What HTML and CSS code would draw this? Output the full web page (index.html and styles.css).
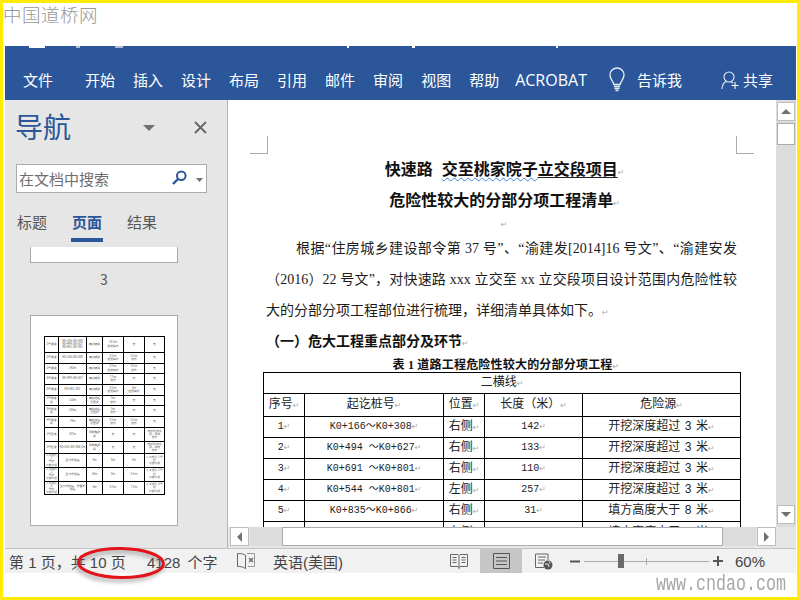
FILE: index.html
```html
<!DOCTYPE html>
<html lang="zh-CN">
<head>
<meta charset="utf-8">
<title>导航</title>
<link rel="stylesheet" href="styles.css">
</head>
<body>
<div class="frame">
  <header class="head"><span class="mark-cn">中国道桥网</span></header>

  <nav class="ribbon">
    <svg class="qat" width="791" height="3" viewBox="0 0 791 3"><rect x="24" width="16" height="2" fill="#fff"/><rect x="71" width="4" height="2" fill="#aebbd2"/><rect x="110" width="8" height="2" fill="#aebbd2"/><rect x="342" width="2" height="2" fill="#fff"/><rect x="407" width="3" height="2" fill="#fff"/><rect x="551" width="2" height="2" fill="#fff"/></svg>
    <span class="tab-file">文件</span>
    <span>开始</span><span>插入</span><span>设计</span><span>布局</span><span>引用</span><span>邮件</span><span>审阅</span><span>视图</span><span>帮助</span>
    <span class="acro">ACROBAT</span>
    <svg class="bulb" width="16" height="25" viewBox="0 0 16 25" fill="none" stroke="#e8edf6" stroke-width="1.3"><path d="M4.8 17.5C4.5 14 1 12.5 1 8a7 7 0 0 1 14 0c0 4.500-3.500 6-3.800 9.500z"/><path d="M5 19.500h6M5.500 21.500h5M6.500 23.500h3" stroke-width="1.500"/></svg>
    <span class="tell">告诉我</span>
    <svg class="person" width="18" height="19" viewBox="0 0 18 19" fill="none" stroke="#e8edf6" stroke-width="1.1"><circle cx="8" cy="6" r="5"/><path d="M1 18c0-4 2-6.500 4.500-7.800M10 11l2 1"/><path d="M14 11v7M10.500 14.500h7" stroke="#fff"/></svg>
    <span class="share">共享</span>
  </nav>

  <main class="main">
    <aside class="nav">
      <div class="nav-head">
        <h1 class="nav-title">导航</h1>
        <svg class="nav-arrow" width="12" height="6" viewBox="0 0 12 6"><path d="M0 0h12L6 6z" fill="#707070"/></svg>
        <svg class="nav-close" width="13" height="13" viewBox="0 0 13 13" stroke="#666" stroke-width="1.800"><path d="M1 1l11 11M12 1L1 12"/></svg>
      </div>
      <div class="search">
        <span class="search-text">在文档中搜索</span>
        <svg class="search-icon" width="15" height="15" viewBox="0 0 15 15" fill="none" stroke="#2b579a" stroke-width="2"><circle cx="9.300" cy="5.700" r="4.300"/><path d="M6 9l-5 5" stroke-width="2.400"/></svg>
        <svg class="search-drop" width="7" height="4" viewBox="0 0 7 4"><path d="M0 0h7L3.500 4z" fill="#707070"/></svg>
      </div>
      <div class="tabs">
        <span class="tab">标题</span>
        <span class="tab tab-on">页面</span>
        <span class="tab">结果</span>
      </div>
      <div class="thumb-cut"></div>
      <div class="thumb-num">3</div>
      <div class="thumb">
        <table class="mini">
          <tr class="h16"><td>2号通道</td><td>K0+166~K0+308 K0+494~K0+627 K0+691~K0+801</td><td>高边坡段</td><td>15.5m<br>超挖填方</td><td>无</td><td>无</td></tr>
          <tr class="h11"><td>2号通道</td><td>K0+166~K0+308</td><td>高边坡段</td><td>0.5m<br>超挖填方</td><td>0.5m<br>挖方</td><td>无</td></tr>
          <tr class="h10"><td>2号通道</td><td>142m</td><td>高边坡段</td><td>0.5m<br>超挖填方</td><td>0.5m<br>挖方</td><td>无</td></tr>
          <tr class="h11"><td>3号通道</td><td>K0+494~K0+627</td><td>高边坡段</td><td>7.5m<br>挖方</td><td>无</td><td>无</td></tr>
          <tr class="h11"><td>3号通道</td><td>K0+691~801</td><td>高边坡段</td><td>0.5m<br>超挖填方</td><td>8m<br>超挖填方</td><td>无</td></tr>
          <tr class="h10"><td>2号通道<br>段</td><td>110m</td><td>高陡挡墙<br>及围护</td><td>5m<br>挖方</td><td>无</td><td>无</td></tr>
          <tr class="h11"><td>3号通道<br>段</td><td>133m</td><td>高陡挡墙<br>及围护</td><td>5m<br>挖方</td><td>无</td><td>无</td></tr>
          <tr class="h11"><td>4号通道<br>段</td><td>74m</td><td>高陡挡墙<br>及围护</td><td>0.5m<br>挖方</td><td>0.5m<br>挖方</td><td>无</td></tr>
          <tr class="h14"><td>1号匝道</td><td>257m</td><td>预制箱梁<br>段</td><td>无</td><td>无</td><td>架桥机架设<br>梁，吊装<br>挖方</td></tr>
          <tr class="h12"><td>2号匝道</td><td>K0+835~K0+866,8m</td><td>预制箱梁<br>段</td><td>无</td><td>无</td><td>架桥机架设<br>梁，吊装<br>挖方</td></tr>
          <tr class="h12"><td>人工挖孔 1<br>号桥<br>分部分项</td><td>重力式挡墙</td><td>8m</td><td>8m</td><td>8m</td><td>人工挖孔 1 号<br>桥<br>分部分项</td></tr>
          <tr class="h13"><td>人工挖孔 2<br>号桥<br>分部分项</td><td>重力式挡墙</td><td>10m</td><td>8m</td><td>0.5m</td><td>人工挖孔 2 号<br>桥<br>分部分项</td></tr>
          <tr class="h13"><td>人工挖孔 3<br>号桥<br>分部分项</td><td>重力式挡墙，悬臂式<br>挡墙</td><td>8m</td><td>0.5m</td><td>7.5m</td><td>人工挖孔 3 号<br>桥<br>分部分项</td></tr>
        </table>
      </div>
    </aside>

    <section class="work">
      <div class="work-top">
        <div class="doc">
          <div class="crops"><i class="crop crop-l"></i><i class="crop crop-r"></i></div>
          <div class="text">
            <p class="title">快速路 <span class="wavy">交至桃家院子</span><span class="under">立交段项目</span><span class="pm">↵</span></p>
            <p class="title">危险性较大的分部分项工程清单<span class="pm">↵</span></p>
            <p class="blank"><span class="pm">↵</span></p>
            <p class="body just first">根据“住房城乡建设部令第 37 号”、“渝建发[2014]16 号文”、“渝建安发</p>
            <p class="body just">（2016）22 号文”，对快速路 xxx 立交至 xx 立交段项目设计范围内危险性较</p>
            <p class="body">大的分部分项工程部位进行梳理，详细清单具体如下。<span class="pm">↵</span></p>
            <p class="sub">（一）危大工程重点部分及环节<span class="pm">↵</span></p>
            <p class="cap">表 1 道路工程危险性较大的分部分项工程<span class="pm">↵</span></p>
          </div>
          <table class="sheet">
            <colgroup><col class="c1"><col class="c2"><col class="c3"><col class="c4"><col class="c5"></colgroup>
            <tr class="r-top"><td colspan="5">二横线<span class="pm">↵</span></td></tr>
            <tr class="r-hd"><td>序号<span class="pm">↵</span></td><td>起讫桩号<span class="pm">↵</span></td><td>位置<span class="pm">↵</span></td><td>长度（米）<span class="pm">↵</span></td><td>危险源<span class="pm">↵</span></td></tr>
            <tr><td class="m">1<span class="pm">↵</span></td><td class="m">K0+166～K0+308<span class="pm">↵</span></td><td>右侧<span class="pm">↵</span></td><td class="m">142<span class="pm">↵</span></td><td class="w">开挖深度超过 3 米<span class="pm">↵</span></td></tr>
            <tr><td class="m">2<span class="pm">↵</span></td><td class="m">K0+494 ～K0+627<span class="pm">↵</span></td><td>右侧<span class="pm">↵</span></td><td class="m">133<span class="pm">↵</span></td><td class="w">开挖深度超过 3 米<span class="pm">↵</span></td></tr>
            <tr><td class="m">3<span class="pm">↵</span></td><td class="m">K0+691 ～K0+801<span class="pm">↵</span></td><td>右侧<span class="pm">↵</span></td><td class="m">110<span class="pm">↵</span></td><td class="w">开挖深度超过 3 米<span class="pm">↵</span></td></tr>
            <tr><td class="m">4<span class="pm">↵</span></td><td class="m">K0+544 ～K0+801<span class="pm">↵</span></td><td>左侧<span class="pm">↵</span></td><td class="m">257<span class="pm">↵</span></td><td class="w">开挖深度超过 3 米<span class="pm">↵</span></td></tr>
            <tr><td class="m">5<span class="pm">↵</span></td><td class="m">K0+835～K0+866<span class="pm">↵</span></td><td>右侧<span class="pm">↵</span></td><td class="m">31<span class="pm">↵</span></td><td class="w">填方高度大于 8 米<span class="pm">↵</span></td></tr>
            <tr class="r-cut"><td></td><td></td><td>右侧<span class="pm">↵</span></td><td></td><td class="w">填方高度大于 8 米<span class="pm">↵</span></td></tr>
          </table>
        </div>
        <div class="vbar">
          <div class="sbtn vup"><svg width="10" height="5" viewBox="0 0 10 5"><path d="M0 5L5 0l5 5z" fill="#707070"/></svg></div>
          <div class="vthumb"></div>
          <div class="vfill"></div>
          <div class="sbtn vdown"><svg width="10" height="5" viewBox="0 0 10 5"><path d="M0 0h10L5 5z" fill="#707070"/></svg></div>
        </div>
      </div>
      <div class="hbar">
        <div class="sbtn hbtn"><svg width="5" height="10" viewBox="0 0 5 10"><path d="M5 0v10L0 5z" fill="#707070"/></svg></div>
        <div class="htrack"><div class="hthumb"></div></div>
        <div class="sbtn hbtn"><svg width="5" height="10" viewBox="0 0 5 10"><path d="M0 0v10l5-5z" fill="#707070"/></svg></div>
      </div>
    </section>
  </main>

  <footer class="status">
    <span class="s-page">第 1 页，共 10 页</span>
    <span class="s-words">4128 个字</span>
    <svg class="s-proof" width="18" height="17" viewBox="0 0 18 17" fill="none" stroke="#666"><path d="M8.500 2.500C6.500.5 3.500.5 .5.500v13c3 0 5 0 8 2zM8.500 2.500V16"/><path d="M10 .5h7.500v13H11" stroke="#999"/><path d="M12 5l4 4M16 5l-4 4" stroke-width="1.300"/></svg>
    <span class="s-lang">英语(美国)</span>
    <svg class="s-read" width="18" height="17" viewBox="0 0 18 17" fill="none" stroke="#666"><path d="M.5 1.500h7.500l1 1 1-1h7.500v12h-7.500l-1 1-1-1H.5zM9 2.500V16"/><path d="M2.500 4.500h4M2.500 7h4M2.500 9.500h4M11.500 4.500h4M11.500 7h4M11.500 9.500h4"/></svg>
    <div class="s-print"><svg width="17" height="16" viewBox="0 0 17 16" fill="none" stroke="#555"><path d="M.5.500h16v15H.5z"/><path d="M3 4.500h11M3 8h11M3 11.500h11"/></svg></div>
    <svg class="s-web" width="18" height="17" viewBox="0 0 18 17" fill="none" stroke="#666"><path d="M9 14.500H.5V1h12.500v6"/><path d="M3 4h8M3 7h7M3 10h5"/><circle cx="13" cy="12" r="4.500" fill="#555" stroke="none"/><path d="M10 11h3l1 3M14 8.500l1 2" stroke="#e8e8e8"/></svg>
    <svg class="s-minus" width="10" height="3" viewBox="0 0 10 3"><rect width="10" height="2" y="0.500" fill="#555"/></svg>
    <div class="slider"><i class="slider-tick"></i><i class="slider-knob"></i></div>
    <svg class="s-plus" width="10" height="10" viewBox="0 0 10 10"><path d="M0 4h10v2H0zM4 0h2v10H4z" fill="#555"/></svg>
    <span class="s-zoom">60%</span>
    <svg class="ring" width="96" height="40" viewBox="0 0 96 40" fill="none">
      <defs><filter id="soft" x="-20%" y="-40%" width="140%" height="180%"><feGaussianBlur stdDeviation="2"/></filter></defs>
      <ellipse cx="44" cy="20" rx="42" ry="14.500" stroke="#555" stroke-opacity=".55" stroke-width="3" filter="url(#soft)"/>
      <ellipse cx="45" cy="17" rx="42.500" ry="14.500" transform="rotate(1 45 17)" stroke="#e2151b" stroke-width="3"/>
    </svg>
  </footer>

  <div class="foot"><span class="mark-url">www.cndao.com</span></div>
</div>
</body>
</html>
```
FILE: styles.css
```css
* { box-sizing: border-box; }
html, body { margin: 0; padding: 0; background: #fff; }
body { font-family: "Noto Sans CJK SC", "Liberation Sans", sans-serif; }
p, h1 { margin: 0; font-weight: 400; }

.frame {
  width: 800px; height: 600px; overflow: hidden;
  border: 3px solid #ffec00;
  padding: 0 1px 0 2px;
  display: flex; flex-direction: column;
  background: #fff;
}

/* watermark strips */
.head { height: 43px; flex: none; margin-left: -2px; }
.mark-cn {
  display: block; font-size: 18.500px; line-height: 22px; letter-spacing: .500px;
  color: #999; font-weight: 300;
}
.foot { height: 24px; flex: none; display: flex; justify-content: flex-end; padding-right: 10px; }
.mark-url {
  font-family: "Liberation Mono", monospace; font-size: 16.670px; line-height: 24px;
  color: #a6a6a6; transform: scaleY(1.350);
}

/* ribbon */
.ribbon {
  position: relative; height: 54px; flex: none;
  background: #2b579a; color: #fff;
  display: flex; align-items: center; gap: 18px;
  padding: 14px 0 0 18px;
  font-size: 15px; line-height: 20px;
}
.qat { position: absolute; left: 0; top: 0; }
.tab-file { margin-right: 14px; }
.acro { font-family: "Open Sans", sans-serif; font-size: 16px; margin-left: -2px; margin-top: -1px; }
.bulb { margin-left: 4px; margin-top: -1px; }
.tell { margin-left: -6px; }
.person { margin-left: 21px; }
.share { margin-left: -14px; }

/* main */
.main { flex: 1; min-height: 0; display: flex; }
.nav {
  width: 223px; flex: none; overflow: hidden;
  background: #e6e6e6; border-right: 1px solid #b4b4b4;
  padding-left: 11px;
}
.nav-head { height: 64px; display: flex; align-items: center; padding-bottom: 11px; }
.nav-title { font-size: 28px; line-height: 53px; color: #2b579a; width: 128px; margin-left: -1px; }
.nav-arrow { margin-top: 2px; }
.nav-close { margin-left: 39px; margin-top: 1px; }

.search {
  width: 191px; height: 29px;
  background: #fff; border: 1px solid #ababab;
  display: flex; align-items: center; padding-left: 2px;
}
.search-text { font-size: 15px; color: #6e6e6e; width: 153px; }
.search-icon { margin-top: -2px; }
.search-drop { margin-left: 9px; margin-top: 2px; }

.tabs { display: flex; gap: 23px; margin-top: 19px; margin-bottom: 5px; font-size: 15px; line-height: 20px; color: #555; }
.tab { padding: 0 1px 10px; }
.tab-on { color: #2b579a; font-weight: 700; padding-bottom: 6px; border-bottom: 4px solid #2b579a; }

.thumb-cut { width: 148px; height: 16px; margin-left: 14px; background: #fff; border: 1px solid #aaa; border-top: 0; }
.thumb-num { width: 148px; margin-left: 14px; margin-bottom: 20px; text-align: center; font-size: 14px; line-height: 32px; color: #555; }
.thumb { width: 148px; height: 211px; margin-left: 14px; background: #fff; border: 1px solid #aaa; padding: 20px 0 0 13px; }
.mini {
  width: 120px; table-layout: fixed; border-collapse: collapse;
  font-size: 2.800px; line-height: 3.200px; color: #555; text-align: center;
}
.mini td { border: 1px solid #000; padding: 0; overflow: hidden; }
.mini td:nth-child(1) { width: 14px; }
.mini td:nth-child(2) { width: 28px; }
.mini td:nth-child(3) { width: 16px; }
.mini td:nth-child(4) { width: 21px; }
.mini td:nth-child(5) { width: 21px; }
.mini td:nth-child(6) { width: 20px; }
.h16 { height: 16px; } .h14 { height: 14px; } .h13 { height: 13px; }
.h12 { height: 12px; } .h11 { height: 11px; } .h10 { height: 10px; }

/* document */
.work { flex: 1; min-width: 0; display: flex; flex-direction: column; }
.work-top { flex: 1; min-height: 0; display: flex; }
.doc { flex: 1; min-width: 0; overflow: hidden; padding: 36px 22px 0; background: #fff; }
.crops { display: flex; justify-content: space-between; height: 18px; }
.crop { width: 18px; height: 18px; border-bottom: 1px solid #aaa; display: block; }
.crop-l { border-right: 1px solid #aaa; }
.crop-r { border-left: 1px solid #aaa; }

.text { padding: 0 17px 0 16px; color: #1c1c1c; font-family: "Liberation Serif", "Noto Sans CJK SC", serif; font-size: 14px; }
.pm { font-family: "DejaVu Sans", sans-serif; font-size: 8px; font-weight: 400; color: #aaa; word-spacing: 0; line-height: 0; }
.title { height: 31px; font-size: 16px; line-height: 31px; font-weight: 700; text-align: center; color: #111; word-spacing: 5px; padding-left: 6px; }
.wavy { text-decoration: underline wavy #3f7fd6 1px; text-underline-offset: 2px; }
.under { text-decoration: underline #222 1px; text-underline-offset: 2px; }
.blank { height: 17px; line-height: 14px; text-align: center; padding-left: 5px; }
.body { height: 31px; font-size: 14px; line-height: 31px; white-space: nowrap; }
.just { text-align: justify; text-align-last: justify; white-space: normal; }
.first { padding-left: 30px; }
.sub { height: 32px; font-size: 14px; line-height: 32px; font-weight: 700; color: #111; }
.cap { height: 14px; font-size: 12px; line-height: 14px; font-weight: 700; text-align: center; color: #111; padding-left: 9px; letter-spacing: .2px; }

.sheet {
  width: 477px; margin-left: 13px;
  table-layout: fixed; border-collapse: collapse;
  font-family: "Liberation Mono", "Noto Sans CJK SC", monospace;
  font-size: 12px; line-height: 16px; color: #222; text-align: center;
}
.sheet td { border: 1px solid #000; padding: 0; height: 21px; white-space: nowrap; }
.sheet .r-hd td { height: 23px; }
.sheet .r-cut td { vertical-align: top; padding-top: 3px; }
.sheet .m { font-size: 10px; }
.sheet .w { word-spacing: -3px; }
.c1 { width: 41px; } .c2 { width: 139px; } .c3 { width: 41px; } .c4 { width: 98px; } .c5 { width: 158px; }

/* scrollbars */
.sbtn { background: #fff; border: 1px solid #bdbdbd; display: flex; align-items: center; justify-content: center; flex: none; }
.vbar { width: 20px; flex: none; background: #dcdcdc; display: flex; flex-direction: column; padding: 2px 1px 3px; }
.vup { height: 19px; }
.vdown { height: 19px; }
.vthumb { height: 22px; margin-top: 2px; background: #fff; border: 1px solid #ababab; flex: none; }
.vfill { flex: 1; }
.hbar { height: 21px; flex: none; background: #e6e6e6; display: flex; align-items: flex-start; padding: 0 20px 0 2px; }
.hbtn { width: 19px; height: 19px; }
.htrack { flex: 1; height: 19px; margin: 0 1px; background: #dcdcdc; padding-left: 32px; padding-right: 33px; }
.hthumb { height: 19px; background: #fff; border: 1px solid #ababab; }

/* status */
.status {
  position: relative; height: 25px; flex: none;
  background: #f1f1f1; border-top: 1px solid #c4c4c4;
  display: flex; align-items: center;
  padding-left: 4px;
  font-family: "Liberation Sans", "Noto Sans CJK SC", sans-serif;
  font-size: 15px; color: #444;
}
.s-page { width: 138px; white-space: nowrap; }
.s-words { width: 90px; white-space: nowrap; word-spacing: 3px; }
.s-proof { flex: none; }
.s-lang { margin-left: 18px; white-space: nowrap; }
.s-read { margin-left: auto; flex: none; }
.s-print { width: 42px; height: 24px; margin-left: 12px; background: #c6c6c6; display: flex; align-items: center; justify-content: center; flex: none; }
.s-web { margin-left: 13px; flex: none; }
.s-minus { margin-left: 17px; flex: none; }
.slider { position: relative; width: 125px; height: 1px; margin-left: 4px; background: #aaa; flex: none; }
.slider-knob { position: absolute; left: 34px; top: -7px; width: 6px; height: 14px; background: #6a6a6a; }
.slider-tick { position: absolute; left: 62px; top: -3px; width: 1px; height: 7px; background: #aaa; }
.s-plus { margin-left: 4px; flex: none; }
.s-zoom { margin-left: 12px; margin-right: 30px; width: 31px; white-space: nowrap; }
.ring { position: absolute; left: 71px; top: -3px; overflow: visible; }
```
